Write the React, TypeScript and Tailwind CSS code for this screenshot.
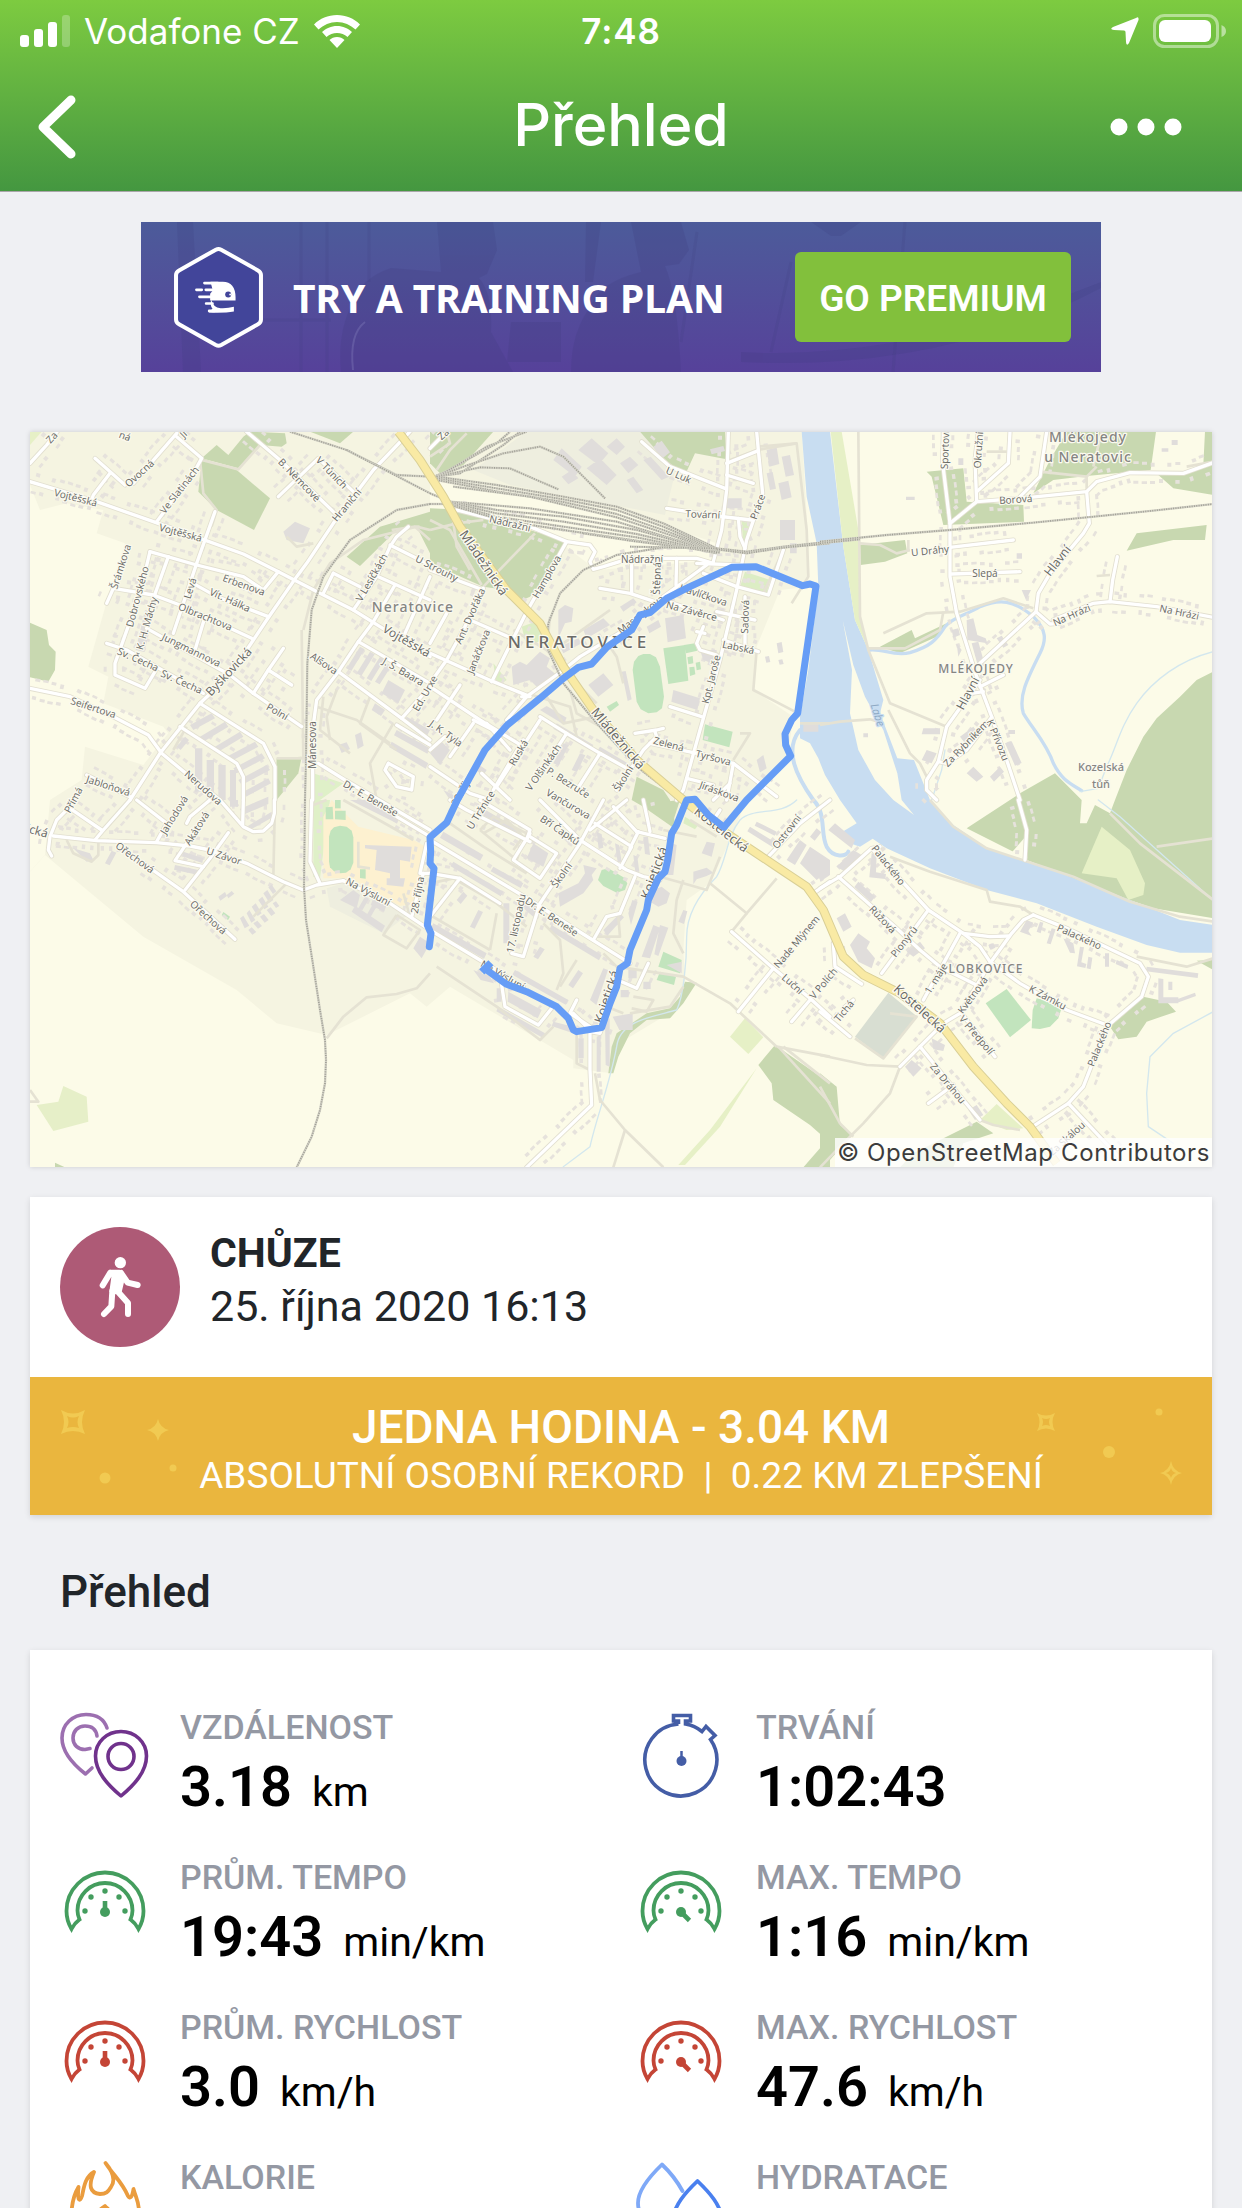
import React from "react";

/* ------------------------------------------------------------------ */
/* Map data: six survey sheets, each drawn at three units per map unit */
/* ------------------------------------------------------------------ */

type Label = [x: number, y: number, angle: number, text: string, size?: number];

interface Sheet {
  x: number;
  y: number;
  areas: [fill: string, points: string][];
  buildings: string;
  paths: string[];
  roads: string[];
  plain: string[];
  rails: string[];
  labels: Label[];
}

const FOREST = "#c8d8b0";
const WATER = "#c8ddf1";
const MEADOW = "#e6f0c6";
const PITCH = "#c2e4bd";
const LAND = "#fcfbe8";
const TOWN = "#f5f4e1";
const YARD = "#eeeedf";

const SHEETS: Sheet[] = [
  {
    x: 0,
    y: -2,
    areas: [
      [TOWN, "0,0 2315,0 2335,340 2335,470 2250,480 2180,650 2170,780 2290,860 2270,1000 2150,1110 2100,1230 2040,1360 1970,1410 1960,1560 1965,1650 1955,1720 1900,1760 1750,1850 1745,1930 1630,1915 1630,1890 1260,1670 1190,1730 1140,1690 890,1815 740,1780 620,1680 340,1520 45,1275 0,1325"],
      [LAND, "0,165 30,240 110,220 220,240 200,310 285,340 240,480 175,710 235,740 220,820 400,890 415,910 340,1005 165,950 155,1050 60,1110 45,1275 0,1325"],
      [MEADOW, "0,5 35,5 0,45"],
      [FOREST, "515,85 620,120 720,205 672,300 560,240 505,185"],
      [FOREST, "515,85 560,45 595,75 640,20 660,5 765,10 770,40 755,50 690,45 625,115"],
      [FOREST, "840,5 970,5 930,40"],
      [FOREST, "950,380 1050,290 1200,245 1200,280 1100,300 990,408"],
      [FOREST, "1160,290 1200,270 1200,370"],
      [FOREST, "0,578 50,600 57,645 77,665 75,720 55,755 0,742"],
      [FOREST, "740,985 815,980 805,1030 740,1110 735,1110"],
      ["#dff0c8", "850,1030 940,1060 870,1110 900,1110 870,1345 850,1340"],
    ],
    buildings:
      "M480 885l65 -35 10 15 -65 35z M510 920l75 -45 10 15 -75 45z M555 950l75 -45 10 15 -75 45z M590 980l85 -45 10 15 -85 45z M610 1015l85 -45 10 15 -85 45z M625 1050l85 -45 10 15 -85 45z M640 1085l75 -40 8 15 -75 40z M495 955h22v130h-22z M530 990h22v120h-22z M565 1005h22v105h-22z M600 1020h18v90h-18z M345 540l28 6 -30 120 -26 -6z M950 715l40 -65 14 8 -40 65z M980 730l40 -65 14 8 -40 65z M1010 745l40 -65 14 8 -40 65z M1035 755l35 -55 14 8 -35 55z M1055 790l20 -40 50 30 -20 40z M760 305l35 -30 45 20 -20 45 -50 -10z M925 945l25 -8 10 20 -25 12z M975 915l18 -8 8 40 -18 10z M1035 820l30 20 -12 18 -28 -18z M1100 900l100 55 -8 16 -100 -55z M1130 860l70 40 -8 16 -70 -40z M1085 935l110 65 -8 16 -110 -65z M440 950l25 -30 12 10 -25 30z",
    paths: ["510,90 520,190 560,240 545,290", "515,90 625,118 690,45", "740,985 830,985", "860,830 980,870 1080,940", "880,800 870,900 960,970", "920,780 890,860 900,930", "1020,800 990,880 1100,960", "1040,1110 1020,1000 1090,880", "815,600 820,985", "820,600 850,480 900,400 1000,330 1160,290 1200,300", "1085,300 1155,290 1200,330", "430,960 470,890", "770,320 800,350 850,340"],
    roads: [
      "0,155 200,215 370,275 510,325 640,372 745,425 870,490 970,540 1050,590 1200,680",
      "0,100 50,45 85,0",
      "195,85 285,165", "240,130 190,195 185,210",
      "310,160 440,10", "440,20 515,85 490,130 380,275",
      "650,5 750,90 915,250", "745,200 865,85 970,185",
      "1140,5 1030,120 910,280 830,400 800,440 710,570 600,735 510,820 390,970 300,1110",
      "555,245 500,400 430,610",
      "360,365 500,405 640,440 700,480 745,425",
      "360,365 330,490 255,700 255,735 345,775 375,725",
      "415,380 365,520", "230,520 250,475 370,495 450,525 665,625", "480,455 560,500 715,560",
      "350,595 600,735 670,790 815,890", "525,560 495,660", "230,640 290,660 520,790",
      "760,655 715,720 670,790", "715,720 785,765",
      "0,775 120,800 250,860 355,915 395,970 480,1040 570,1110",
      "510,820 700,940 735,1010 735,1110", "450,890 620,1000 640,1040 640,1110",
      "170,1035 300,1100",
      "1135,290 1100,320 1080,350 1040,440 970,540", "1080,345 1200,405", "910,430 990,470", "910,430 880,490", "1045,440 1200,510", "1095,465 1030,575 985,635 925,725 860,810 848,900 848,1110",
      "1200,440 1125,610", "985,635 1200,760", "925,725 1115,865 1200,770", "1115,865 1200,930",
      "865,1000 945,1050 1200,1200",
      "1075,1000 1150,1040 1145,1080 1100,1070 1065,1020 1075,1000",
    ],
    plain: ["1100,885 1200,945"],
    rails: ["780,5 950,60 1100,135 1200,140", "950,60 1200,190", "1200,222 1100,240 960,330 880,440 845,540 832,700 828,985 825,1110"],
    labels: [
      [65, 22, -48, "Za"], [285, 18, 20, "ná"], [460, 12, -45, "Ji"], [328, 130, -42, "Ovocná"], [448, 180, -52, "Ve Slatinách"], [137, 203, 14, "Vojtěšská"], [452, 308, 15, "Vojtěšská"],
      [808, 150, 46, "B. Němcové"], [905, 128, 46, "V Tůních"], [950, 225, -50, "Hraniční"], [272, 410, -72, "Šrámkova"], [322, 500, -75, "Dobrovského"], [350, 580, -74, "K. H. Máchy"], [480, 475, -72, "Levá"],
      [642, 465, 20, "Erbenova"], [600, 510, 24, "Vít. Hálka"], [526, 560, 22, "Olbrachtova"], [484, 660, 26, "Jungmannova"], [324, 688, 24, "Sv. Čecha"], [455, 755, 24, "Sv. Čecha"],
      [596, 725, -47, "Byškovická", 12], [882, 700, 34, "Alšova"], [742, 845, 30, "Polní"], [190, 833, 18, "Seifertova"], [235, 1067, 18, "Jabloňová"], [520, 1073, 42, "Nerudova"], [847, 945, -90, "Mánesova"],
      [1025, 442, -60, "V Lesíčkách"], [1220, 415, 27, "U Strouhy"], [1130, 632, 30, "Vojtěšská", 12], [1120, 725, 30, "J. Š. Baara"], [1185, 790, -60, "Ed. Urxe"], [1022, 1105, 30, "Dr. E. Beneše"], [130, 1110, -62, "Přímá"],
    ],
  },
  {
    x: 400,
    y: -2,
    areas: [
      [LAND, "0,150 130,155 560,240 860,340 860,390 500,420 380,330 0,240"],
      [YARD, "130,120 290,5 630,5 740,80 730,150 705,255 500,215 240,165"],
      [LAND, "985,640 970,780 1110,850 1150,620 1160,480 1110,500 1060,560"],
      [FOREST, "0,5 190,5 100,105 30,130 0,100"],
      [FOREST, "0,235 65,238 130,250 400,330 395,380 300,500 265,515 230,480 160,470 0,400"],
      [FOREST, "630,5 885,5 890,88 795,70 765,135 700,85"],
      [FOREST, "620,1040 700,1080 720,1110 740,1200 640,1130 605,1110"],
      ["#dcedc4", "275,590 330,570 360,620 290,650"],
      ["#dcedc4", "935,270 962,268 940,355"],
      ["#dcedc4", "945,425 1020,450 1010,490 930,470"],
      ["#dcedc4", "190,700 230,750 200,770"],
      [PITCH, "700,655 765,645 775,752 715,762"],
      [PITCH, "762,645 795,640 802,662 768,670"],
      [PITCH, "772,682 788,678 790,700 775,703"],
      [PITCH, "778,712 793,710 796,733 780,738"],
      [PITCH, "797,698 810,695 813,718 800,721"],
      [PITCH, "825,883 908,905 898,952 818,930"],
      [PITCH, "530,830 560,813 567,825 540,845"],
      [PITCH, "625,678 640,672 660,672 678,682 690,710 702,800 696,835 680,847 655,850 632,838 620,815 608,720 612,695"],
    ],
    buildings:
      "M370 90l25 -35 60 55 -20 30z M445 60l40 -35 50 45 -30 35z M470 115l40 -30 50 50 -30 30z M530 50l30 -25 25 25 -25 25z M590 150l20 -10 30 40 -20 10z M640 90l22 -10 55 60 -22 10z M570 100l30 -20 25 25 -30 25z M395 140l30 -20 20 25 -30 18z M670 50l25 -18 25 35 -25 20z M840 58l40 -10 5 15 -40 10z M890 205h45v30h-45z M1010 60l30 -8 8 50 -30 8z M1055 80l25 -5 12 60 -25 5z M1010 130l18 -4 10 50 -18 4z M1045 160l30 -8 10 50 -30 8z M1050 270h45v60h-45z M1080 340h20v30h-20z M705 565l55 -10 8 70 -55 12z M385 540l20 -15 25 10 -5 40 -20 5 -20 45z M730 780l80 25 -8 35 -78 -25z M810 660h50v45l-40 -15z M475 765l45 -35 30 35 -45 35z M575 725l12 -2 18 85 -12 5z M245 710l25 -15 20 10 40 -40 30 20 -10 25 30 25 -60 35 -20 -20 -50 15z M650 590l35 -20 8 20 -35 20z M570 530l40 -25 10 12 -40 28z M460 600l60 -35 20 20 -70 40z M390 650l55 -25 10 15 -55 30z M980 990l20 -15 10 40 -20 12z M330 840l20 -12 60 35 -10 20z M380 880l110 65 -10 16 -110 -65z M510 950l100 60 -10 16 -100 -60z M0 970l30 -40 30 30 -30 45z M400 940l16 6 -30 60 -16 -6z M450 970l16 6 -25 50 -16 -6z M140 1000l30 20 -10 16 -30 -20z M40 1080l60 30h-40z M1120 880h45v25h-45z M850 545l30 -10 5 20 -30 10z M1040 640l15 -4 5 30 -15 4z M1005 680l12 -2 4 18 -12 2z M1045 690l12 -2 4 14 -12 2z",
    paths: ["0,270 60,300 155,465", "0,300 80,280 160,270", "65,240 80,350 120,420", "315,310 160,470", "20,120 60,60 110,10", "0,80 60,40 50,5", "250,600 350,660 360,560", "350,660 420,740 500,820", "290,790 420,830 440,920", "980,50 1100,40 1130,300 1135,440 1085,520", "540,540 470,590 400,640", "980,660 970,780 1105,850", "930,910 960,910 910,990", "350,800 400,880 500,860", "1000,490 1060,360", "520,620 560,680 580,760", "0,960 60,910", "420,780 440,850 530,900", "900,90 980,60 1100,40", "1110,880 1200,880"],
    roads: [
      "0,55 40,15", "80,240 180,265 300,290 410,335 480,345 495,365 480,395 490,418 520,410 600,385 740,385 800,385 850,400",
      "410,335 350,440 290,545 185,755", "0,420 160,480", "160,475 100,600 50,690 0,760",
      "635,35 720,110 885,175", "895,5 890,180 875,300 850,395", "980,5 985,60 998,190 950,330 920,480 870,690 810,900 760,1080 740,1110", "890,135 970,160", "710,235 860,258 965,270", "925,265 930,320 945,355", "890,100 985,62",
      "820,430 920,470 1015,495 1060,360", "740,385 738,465", "605,400 605,490", "510,475 600,490 690,520", "830,405 700,500 600,590 450,680 400,720 290,800 230,870", "945,500 945,650", "860,545 975,570", "820,590 800,640 810,660 860,675", "880,630 985,665", "700,510 880,570", "800,400 930,405", "800,605 825,610",
      "0,670 100,715 190,755 300,800 275,800", "120,570 235,620", "0,770 150,870 280,950", "90,765 20,870", "190,900 130,870", "50,550 0,640", "720,830 815,860", "130,880 60,980", "330,860 410,910 510,970 600,1020",
      "330,870 200,1070", "410,910 320,1050", "510,970 440,1080", "615,910 680,900 700,895", "675,905 680,920 640,960 560,1080", "660,940 800,970 910,1000 1040,1100", "910,1000 890,1110", "770,1045 850,1065", "0,1010 120,1090 180,1110", "240,960 170,880", "280,930 190,1080", "155,1030 240,1110", "850,1110 900,1060", "0,960 45,920",
    ],
    plain: [],
    rails: [
      "0,145 60,120 170,50 290,5", "20,140 110,90 200,40 240,5", "20,140 90,130 220,45 270,5", "20,140 100,110 220,70 330,50 400,80 470,150 525,205", "20,140 150,112 240,115 320,150 385,178",
      "20,140 200,165 400,200 560,230 700,280 860,355", "20,145 200,175 400,208 560,240 700,290 860,358", "20,150 200,184 400,216 560,252 700,300 860,360", "70,170 300,200 560,262 720,315 860,362",
      "0,190 60,215 300,235 560,275 740,330 870,365", "60,215 200,240 400,260 620,300 860,366", "60,218 200,250 400,275 620,312 860,368", "60,222 200,260 400,290 620,322 860,370", "60,225 220,272 400,300 640,335 870,368", "460,310 600,332 780,355", "0,222 60,222",
      "600,350 860,355 950,365 1060,350 1200,335", "860,358 950,370 1060,353 1200,340",
      "860,355 700,352 560,375 460,420 390,490 355,580 350,650 400,760 500,880 620,1010 750,1110",
    ],
    labels: [
      [40, 12, -42, "Za"], [240, 280, 13, "Nádražní"], [162, 398, 56, "Mládežnická", 13], [350, 440, -60, "Hamplova"], [120, 558, -66, "Ant. Dvořáka"], [145, 665, -68, "Janáčkova"],
      [746, 135, 24, "U Luk"], [818, 253, 2, "Tovární"], [983, 230, -70, "Práce"], [636, 388, 0, "Nádražní"], [680, 445, -88, "Štěpná"], [820, 495, 18, "Havlíčkova"], [785, 543, 15, "Na Závěrce"], [945, 560, -88, "Sadová"], [925, 652, 12, "Labská"], [632, 553, -38, "Masarykova"],
      [843, 748, -76, "Kpt. Jaroše"], [565, 925, 50, "Mládežnická", 13], [716, 942, 15, "Zelená"], [850, 983, 14, "Tyršova"], [868, 1084, 20, "Jiráskova"], [265, 968, -60, "Ruská"], [340, 1012, -55, "V Olšinkách"], [415, 1058, 32, "P. Bezruče"], [580, 1045, -58, "Školní"], [48, 910, 36, "J. K. Tyla"], [98, 1075, -62, "28. října"],
    ],
  },
  {
    x: 790,
    y: -2,
    areas: [
      [WATER, "-55,5 30,5 70,350 105,570 145,660 190,810 180,850 232,985 282,990 330,1110 400,1185 500,1255 620,1295 760,1340 930,1410 1080,1470 1182,1485 1182,1568 1080,1568 980,1545 830,1490 650,1420 500,1380 330,1315 200,1255 158,1226 120,1250 90,1240 60,1210 110,1180 60,1110 15,1035 -5,985 -30,940 -60,925 -60,860 -35,720 -5,470 -10,340 -40,200"],
      [LAND, "68,570 100,705 135,800 190,900 232,1030 245,1110 282,1155 220,1110 165,1050 115,960 90,850 96,720"],
      [MEADOW, "32,5 65,5 115,300 120,560 145,660 105,570 70,350"],
      [FOREST, "320,125 430,115 440,215 610,225 612,275 370,285 335,140"],
      [FOREST, "120,345 255,330 262,370 195,395 122,405"],
      [FOREST, "740,5 1008,5 992,120 800,138 700,150 640,190 690,90"],
      [FOREST, "1155,5 1180,5 1180,195 1060,175 1015,135 1100,130 1150,105"],
      [FOREST, "950,310 1160,285 1155,330 1060,330 920,362"],
      [FOREST, "180,650 275,600 285,625 380,580 350,620 240,670"],
      [FOREST, "1180,725 1130,750 1080,800 1010,865 970,920 920,1020 885,1110 870,1150 825,1125 800,1180 780,1180 785,1110 705,1030 600,1090 440,1195 580,1265 620,1290 930,1410 1000,1435 1180,1465"],
      [LAND, "577,1265 615,1222 622,1285 610,1285"],
      [MEADOW, "845,1190 930,1260 975,1360 970,1395 925,1410 890,1345 785,1330"],
    ],
    buildings:
      "M258 200h26v10h-26z M415 85h15v20h-15z M605 480l28 0 -15 30z M590 370h16v16h-16z M440 570l20 -5 12 50 25 10 5 15 -60 -10z M395 600l20 -5 5 20 -20 8z M530 625l15 -8 20 28 -15 8z M455 640l20 -5 18 65 -20 5z M410 640l15 20 -10 20z M565 900h20v12h-20z M310 895l50 0 0 18 -55 0z M420 920l40 -30 15 20 -40 30z M440 1030l20 -20 30 30 -20 15z M510 1040l30 -30 12 15 -30 30z M555 940l20 -6 30 65 -20 8z M320 960l30 10 -15 30 -30 -10z M1025 55h20v10h-20z M1055 30h18v15h-18z M130 910h14v12h-14z",
    paths: ["115,5 120,560 145,660 210,820 380,890", "190,610 320,550 420,545 550,505 640,535", "145,655 255,655 360,600 370,545", "120,340 180,345 230,370 270,360", "265,330 265,365", "500,65 560,65", "205,840 270,970 300,1000 320,1040", "830,110 800,140 660,125", "845,5 820,110", "800,140 800,180", "1100,110 1180,95", "0,885 60,875 150,868 190,880", "830,438 870,435"],
    roads: [
      "370,5 368,100 390,280 390,440 410,550 470,740 515,860 560,990 600,1110", "390,280 470,215 600,205 800,185 830,155 930,128 1090,130 1180,98", "800,185 808,280 790,310 690,430 655,490 648,545 480,700", "470,215 465,90 475,5", "470,185 565,100 570,5", "600,200 660,140 680,5", "390,352 580,330", "395,432 600,425",
      "648,545 690,582 720,580", "700,570 820,520 870,515 1010,530 1180,562", "870,515 878,450 892,380", "480,770 550,735", "480,750 430,820 380,890 355,995 320,1050 320,1080 350,1110", "515,862 440,960 380,1000 355,995", "455,790 490,785",
    ],
    plain: [],
    rails: ["0,335 200,315 390,300 640,278 800,262 1000,242 1180,222", "0,340 120,328"],
    labels: [
      [375, 50, -88, "Sportovní"], [475, 60, -86, "Okružní"], [587, 208, -4, "Borová"], [330, 362, -6, "U Dráhy"], [495, 430, 0, "Slepá"], [712, 392, -52, "Hlavní", 12], [443, 790, -62, "Hlavní", 12], [755, 555, -24, "Na Hrázi"], [1078, 546, 12, "Na Hrázi"], [438, 940, -46, "Za Rybníkem"], [534, 930, 68, "K Přívozu"],
    ],
  },
  {
    x: 0,
    y: 368,
    areas: [
      ["#fdf1d0", "880,50 905,0 985,80 1150,120 1188,140 1165,310 1110,318 960,235 880,235"],
      [YARD, "890,265 940,250 1080,320 1140,340 1060,400 900,320"],
      [PITCH, "912,82 930,77 950,80 965,92 970,112 970,188 962,208 948,218 930,220 912,214 900,202 897,185 897,110 902,92"],
      [PITCH, "887,22 908,20 910,58 887,58"],
      [PITCH, "915,32 947,32 947,60 915,58"],
      [PITCH, "915,0 932,0 932,25 915,25"],
      [PITCH, "990,208 1007,208 1007,236 990,234"],
      [PITCH, "580,336 600,350 594,360 575,346"],
      ["#e6efc8", "100,858 170,890 175,965 70,993 20,915 85,905"],
      [FOREST, "75,1088 105,1102 75,1102"],
    ],
    buildings:
      "M1005 135l140 5 -5 45 -30 -5 0 70 -30 0 0 -30 -45 -10 5 -60 -35 -5z M1070 235h55l-5 25 -50 -5z M930 300l40 -30 20 15 -10 40z M965 335l10 -18 90 60 -10 20z M985 325l20 -35 12 6 -20 35z M1010 345l20 -35 12 6 -20 35z M1030 295l40 20 -8 20 -40 -20z M1150 445l20 -35 30 20 -25 45z M960 0h60l90 50 -10 20z M650 80l75 -45 0 18 -70 40z M600 0h24v20h-24z M645 20l70 -30v22l-70 30z M630 355l14 30 14 -8 -18 -30z M650 340l14 28 12 -8 -18 -30z M665 320l18 28 12 -8 -18 -30z M685 300l18 28 12 -8 -18 -30z M700 280l18 28 12 -8 -18 -30z M715 262l14 20 10 -8 -14 -20z M655 390l12 14 12 -8 -14 -14z M670 370l14 16 12 -8 -14 -16z M690 350l14 18 12 -8 -14 -18z M710 330l14 18 12 -8 -14 -18z M728 310l10 14 10 -6 -10 -14z M460 155l60 20 -3 14 -60 -20z M435 195l70 15 -3 14 -70 -15z M225 190l20 -38 14 6 -20 38z M130 145l50 15 10 20 -20 5z M565 290l20 -14 6 12 -20 14z M590 285l15 -12 8 8 -18 14z",
    paths: ["770,250 670,350", "890,715 940,650 1010,592 1100,582 1160,565 1200,520", "735,0 730,230", "110,120 130,160 185,185 205,165 205,125", "985,125 985,200 1020,205", "1100,345 1060,405 1130,445 1170,390 1100,345", "1120,280 1140,350", "850,15 890,0", "940,0 1100,90 1150,120", "0,870 25,905 0,905"],
    roads: [
      "300,0 220,90 195,120", "120,20 80,60 60,110 55,150 65,168", "70,108 200,122 380,128 480,138 540,150 650,190 760,245 820,270 860,255 940,242", "120,25 215,90", "320,0 410,70 380,125", "570,0 640,80 670,95 700,93 725,70 733,40 733,0", "640,0 638,75", "470,130 435,182 520,200", "595,98 540,175 465,270", "340,190 460,275 615,418", "845,0 840,185 870,250", "940,242 1080,310 1200,390", "1200,220 1170,220 1190,130", "1145,350 1180,220", "470,70 480,50 540,0", "1100,50 1200,110",
    ],
    plain: [],
    rails: ["825,0 822,260 828,360 850,500 870,630 885,720 888,780 885,850 870,930 845,1010 800,1102"],
    labels: [
      [22, 92, 16, "ická", 12], [432, 45, -58, "Jahodová"], [500, 85, -58, "Akátová"], [315, 173, 36, "Ořechová"], [582, 168, 18, "U Závor"], [535, 352, 42, "Ořechová"], [1015, 275, 28, "Na Výsluní"], [1162, 285, -80, "28. října"],
    ],
  },
  {
    x: 400,
    y: 368,
    areas: [
      [FOREST, "1035,735 1200,850 1200,1010 1185,1015 1140,975 1030,900 1025,850 985,795"],
      [FOREST, "1120,1102 1200,1010 1200,1102"],
      [FOREST, "765,545 800,548 760,610 720,655 650,660 600,700 565,770 550,820 535,820 545,740 560,700 650,640 720,625 750,590"],
      [FOREST, "645,12 750,0 728,68"],
      ["#dcedc4", "765,50 805,75 795,88 760,70"],
      [MEADOW, "945,655 1000,712 955,762 900,710"],
      [MEADOW, "980,805 870,980 765,1095 745,1095 840,990"],
      [PITCH, "700,455 755,480 750,520 685,500"],
      [PITCH, "690,515 738,530 732,555 680,540"],
      [PITCH, "515,210 535,205 580,232 592,250 585,270 560,278 520,258 504,240"],
    ],
    buildings:
      "M385 280l60 -30 20 -30 -5 -25 40 10 -15 20 5 15 -30 40 -70 40z M275 320l20 -20 35 20 -15 35z M365 375l150 90 -8 16 -150 -90z M255 510l160 90 -8 14 -160 -90z M10 370l160 90 -8 16 -160 -90z M40 95l120 70 -10 18 -120 -70z M70 185l150 90 -8 14 -150 -90z M190 200l90 50 -8 14 -90 -50z M310 130l45 30 -15 40 -50 -25z M220 310h18v120h-18z M595 340l12 -40 16 5 -20 70z M520 390l50 -50 12 12 -50 55z M635 470l35 -95 20 8 -30 92z M690 375l25 8 -30 85 -12 -5z M500 95l15 8 5 40 -14 4z M555 130l12 5 8 50 -12 2z M610 165l12 5 6 45 -12 2z M640 110h14l6 55 -15 -3z M725 130l15 5 -10 90 -20 0z M815 160l15 -35 25 5 -10 40z M790 215l40 -12 20 15 -20 10 -30 10 -10 15z M670 270l25 -10 25 20 -10 30 -25 10 -25 -15z M745 365l15 -35 12 4 -10 38z M480 600l40 -95 14 5 -35 105z M525 660l14 -5v145l-12 -5z M500 710l12 -5v110h-12z M548 650l60 -10v50l-40 0z M445 715h16v60h-16z M370 665l60 15 -5 18 -60 -20z M235 575l100 55 -12 25 -90 -50z M200 565h14v40h-14z M205 620l140 80 -6 14 -140 -80z M130 510l50 20 12 20 -40 -10z M415 555l30 -45 14 10 -30 45z M120 380l25 -50 14 6 -25 50z M80 300l20 -25 12 12 -20 25z M310 470l20 -30 14 8 -20 30z M1110 190l30 -50 60 40v30l-40 30z M1070 180l40 -60 20 15 -35 60z M1140 110l20 -25 14 12 -20 25z M960 80l80 50 -8 14 -80 -50z M980 65l60 30 -6 12 -60 -30z M710 495l45 -10v35z M595 510h25v25h-25z M640 545h22v22h-22z M572 570h24v22h-24z M150 20l120 70 -8 16 -120 -70z",
    paths: ["0,110 60,70 160,140 290,220", "0,250 70,235 200,310 290,380", "150,90 190,50 290,100 260,180 150,90", "340,370 390,420 400,520 380,570", "440,480 390,560", "500,410 570,410 565,350", "0,345 60,380 180,450", "180,450 200,340", "20,500 200,620 330,720 370,680", "440,700 440,790 480,810", "520,460 560,500 760,530 900,610 1040,740", "760,460 730,400 740,300 760,240", "690,230 760,250 830,270 870,170", "600,640 720,620 760,560", "495,820 510,900 585,990 700,1102", "585,990 550,1102", "840,250 950,340 1040,235", "950,340 905,395", "1040,740 1200,770", "1045,740 1200,910", "1060,740 1200,850", "610,590 670,600 650,635 605,625", "780,60 860,110", "160,100 230,60 280,110 250,150", "530,620 580,640", "700,90 800,110"],
    roads: [
      "0,120 150,210 300,300 440,390 600,490", "60,0 110,30 300,125", "330,0 450,120 590,210 640,230 690,240", "520,0 450,130 330,310 280,470 245,460", "300,100 250,180 330,235 380,160 300,110", "590,0 480,90", "615,230 570,340 530,350 490,420", "640,0 655,70 660,95", "495,70 605,140 570,205", "620,95 705,115", "625,95 600,145", "550,20 620,95", "0,390 150,480 280,560", "0,350 90,235 0,220", "90,235 210,310", "215,555 225,620 325,675 365,625", "440,600 420,640 480,680", "480,690 480,810 485,915 290,1102", "655,490 620,565 575,545", "520,670 510,700 480,695", "430,640 480,690", "1150,280 1200,245", "1200,0 1110,70 1010,175", "905,395 1030,505 1140,595 1200,650", "1030,505 925,635", "1140,600 1085,665", "870,30 850,60", "150,0 300,90 290,120",
    ],
    plain: [],
    rails: [],
    labels: [
      [152, 30, -58, "U Tržnice"], [415, 12, 30, "Vančurova"], [390, 90, 34, "Bří Čapků"], [395, 225, -55, "Školní"], [365, 350, 34, "Dr. E. Beneše"], [258, 370, -78, "17. listopadu"], [672, 218, -70, "Kojetická", 13], [530, 590, -72, "Kojetická", 13], [875, 88, 38, "Kostelecká", 13], [1070, 95, -52, "Ostrovní"], [1100, 425, -50, "Nade Mlýnem"], [1088, 552, 42, "Luční"], [1180, 550, -50, "V Polích"], [218, 525, 30, "Na Výsluní"],
    ],
  },
  {
    x: 790,
    y: 368,
    areas: [
      [FOREST, "970,590 1040,605 1068,635 980,665 950,710 895,718 870,680"],
      [PITCH, "560,567 633,660 570,712 497,610"],
      [PITCH, "650,595 728,615 715,655 690,680 660,687 635,685 638,630"],
      ["#d8ded2", "205,578 292,650 190,775 105,710"],
      [MEADOW, "530,912 610,985 560,990 480,960"],
      [FOREST, "0,820 50,860 60,975 95,1005 30,1080 0,1102"],
      [FOREST, "280,1060 470,965 520,1000 430,1030 400,1102 240,1102"],
      [FOREST, "1130,482 1180,480 1180,510"],
    ],
    buildings:
      "M0 165l30 20 0 40 -30 20z M25 90l20 -20 60 50 -10 25z M50 200l50 -50 25 15 -50 50z M155 160l15 2 -2 55 30 5 -2 15 -48 -5z M115 245l50 45 -12 16 -50 -45z M50 355l25 -15 20 40 -25 15z M90 435l25 -35 35 25 -10 20 25 30 -10 30 -40 -20z M600 395l20 -35 20 8 -15 25 10 15z M680 430l15 -45 12 3 -15 45z M650 395l10 -30 10 3 -8 32z M730 415l30 15 5 30 -15 -2z M780 440l12 2 -8 45 15 5 -3 12 -25 -5z M805 470l12 3 -5 35 -12 -3z M855 460h12v40h-12z M890 480l35 15 -3 12 -35 -15z M980 500l155 20 -2 14 -155 -20z M1015 535l15 2 0 55 45 0v18h-60z M1045 545h12v25h-12z M1065 600l60 -22 3 10 -60 22z M445 930l25 -15 20 30 -25 15z M255 800l20 -20 30 25 -25 25z M505 435l15 -6 6 14 -15 6z M260 455l40 -30 15 20 -35 25z M335 715l40 20 -5 18 -30 -5z",
    paths: ["330,0 400,80 500,145 760,230 930,305 1080,350 1180,365", "210,170 330,215 500,270 510,305 600,320 640,345", "950,470 1100,500 1180,475", "0,765 140,795 240,800 210,880 130,970 60,1040 0,1102", "50,450 70,480 240,590 300,640", "0,860 60,970 100,1010", "480,960 520,975 600,990", "210,640 290,650 190,775 105,715", "1010,140 1180,115", "870,40 960,130 1180,300"],
    roads: [
      "0,265 60,230 155,145 180,140", "55,230 230,385 300,450 360,500 480,560", "160,150 325,330 430,400 480,440 510,485 600,550 740,630 860,675", "430,400 510,410 565,408", "640,345 610,360 575,400 510,490 420,640 370,670 240,800", "640,345 740,385 960,490 985,530 965,590 860,680 790,860 745,910 630,985", "325,330 185,520", "420,400 310,600", "40,430 45,500 125,552", "0,635 90,710", "70,625 100,600", "300,740 430,900 480,960", "745,910 900,1075", "325,910 400,855", "425,640 525,770", "595,0 620,90 615,180",
    ],
    plain: [],
    rails: [],
    labels: [
      [205, 195, 52, "Palackého"], [188, 358, 46, "Růžová"], [252, 425, -52, "Pionýrů"], [348, 535, -58, "1. máje"], [300, 625, 42, "Kostelecká", 13], [458, 585, -54, "Květnová"], [683, 592, 28, "K Zámku"], [778, 410, 24, "Palackého"], [838, 732, -68, "Palackého"], [470, 705, 50, "V Předpolí"], [384, 850, 50, "Za Dráhou"], [72, 633, -50, "Tichá"], [740, 1015, -42, "Za Skálou"],
    ],
  },
];

const MAIN_ROAD = "1105,5 1170,90 1240,200 1290,290 1430,480 1530,580 1600,710 1690,840 1820,990 1960,1110 2060,1190 2240,1310 2330,1370 2380,1440 2440,1580 2500,1635 2610,1690 2730,1780 2830,1910 2930,2020 3000,2090 3080,2200";

const ROUTE =
  "-2,1550 3,1510 -8,1485 12,1315 0,1300 2,1265 0,1222 50,1178 82,1110 165,960 232,885 330,805 400,745 445,712 485,702 530,652 605,600 630,555 660,548 710,505 775,472 905,412 978,410 1118,467 1140,462 1158,468 1103,850 1085,870 1065,912 1067,945 1082,978 950,1110 882,1192 835,1155 795,1108 770,1110 740,1185 725,1210 713,1290 705,1325 685,1345 655,1410 650,1440 600,1560 592,1600 570,1615 560,1670 540,1720 515,1793 440,1805 430,1800 415,1765 380,1730 290,1685 230,1663 170,1620";

const parse = (points: string) => points.split(" ").map((p) => p.split(",").map(Number));

/** Small house footprints on both sides of a street. */
function housesAlong(points: string): string {
  const pts = parse(points);
  let out = "";
  for (let i = 1; i < pts.length; i++) {
    const [x0, y0] = pts[i - 1];
    const [x1, y1] = pts[i];
    const len = Math.hypot(x1 - x0, y1 - y0);
    if (len < 30) continue;
    const ux = (x1 - x0) / len;
    const uy = (y1 - y0) / len;
    for (let d = 18; d < len - 10; d += 25) {
      for (const side of [-1, 1]) {
        const r = Math.abs(Math.sin(x0 * 3.1 + y1 * 1.7 + d * 5.3 + side * 2.9));
        if (r < 0.25) continue;
        const off = side * (20 + r * 10);
        const cx = x0 + ux * d - uy * off;
        const cy = y0 + uy * d + ux * off;
        const a = 4 + r * 4;
        const b = 4 + (1 - r) * 4;
        const ax = ux * a, ay = uy * a, bx = -uy * b, by = ux * b;
        out += `M${(cx - ax - bx).toFixed(0)} ${(cy - ay - by).toFixed(0)}l${(2 * ax).toFixed(0)} ${(2 * ay).toFixed(0)} ${(2 * bx).toFixed(0)} ${(2 * by).toFixed(0)} ${(-2 * ax).toFixed(0)} ${(-2 * ay).toFixed(0)}z`;
      }
    }
  }
  return out;
}

function Layer({ draw }: { draw: (s: Sheet) => React.ReactNode }) {
  return (
    <>
      {SHEETS.map((s, i) => (
        <g key={i} transform={`translate(${s.x} ${s.y}) scale(0.33333)`}>
          {draw(s)}
        </g>
      ))}
    </>
  );
}

const SHEET_B = "translate(400 -2) scale(0.33333)";
const SHEET_A = "translate(0 -2) scale(0.33333)";
const SHEET_C = "translate(790 -2) scale(0.33333)";

function RouteMap() {
  return (
    <svg viewBox="0 0 1182 735" className="block h-auto w-full" role="img" aria-label="Mapa trasy">
      <rect width="1182" height="735" fill={LAND} />
      <Layer draw={(s) => s.areas.map(([fill, p], i) => <polygon key={i} points={p} fill={fill} />)} />
      <g transform={SHEET_C} fill="none" stroke={WATER} strokeLinejoin="round" strokeLinecap="round">
        <path strokeWidth="10" d="M148 660C190 655 220 680 270 668C330 650 350 630 375 590C400 560 440 555 480 530C540 505 580 510 640 560C680 600 680 630 660 670C620 750 595 800 610 850C640 900 680 940 700 1000C725 1050 750 1060 785 1082" />
        <path strokeWidth="12" d="M-60 900C-110 960 -70 1040 -20 1110C20 1150 0 1210 20 1250C40 1285 80 1280 85 1265" />
        <g strokeWidth="4" stroke="#d3e7ee">
          <path d="M1180 665C1080 690 1000 750 950 820C900 890 890 950 860 1010L835 1075L780 1085" />
          <path d="M375 960L365 1020L335 1110" />
          <path d="M1180 1745L1060 1810L990 1880L980 1990L985 2090L1060 2140" />
          <path d="M835 1110L900 1160L1180 1412" />
          <path d="M-70 1110C-120 1160 -200 1130 -240 1170C-280 1220 -280 1290 -310 1340C-350 1380 -400 1440 -400 1520C-400 1600 -410 1700 -430 1740C-500 1760 -600 1770 -610 1850C-630 1960 -670 2060 -690 2150L-770 2210" />
        </g>
      </g>
      <Layer draw={(s) => <path d={s.roads.map(housesAlong).join("")} fill="#e6e2dc" />} />
      <Layer draw={(s) => <path d={s.buildings} fill="#e0dddb" />} />
      <Layer
        draw={(s) =>
          s.paths.map((p, i) => <polyline key={i} points={p} fill="none" stroke="#e5e2d3" strokeWidth="8" strokeLinejoin="round" />)
        }
      />
      <Layer
        draw={(s) =>
          [...s.roads, ...s.plain].map((p, i) => (
            <polyline key={i} points={p} fill="none" stroke="#e2dfd0" strokeWidth="15" strokeLinejoin="round" strokeLinecap="round" />
          ))
        }
      />
      <Layer
        draw={(s) =>
          [...s.roads, ...s.plain].map((p, i) => (
            <polyline key={i} points={p} fill="none" stroke="#ffffff" strokeWidth="10" strokeLinejoin="round" strokeLinecap="round" />
          ))
        }
      />
      <Layer
        draw={(s) =>
          s.rails.map((p, i) => (
            <g key={i} fill="none" strokeLinejoin="round">
              <polyline points={p} stroke="#d3d2c6" strokeWidth="7" />
              <polyline points={p} stroke="#a09f95" strokeWidth="5" strokeDasharray="3 4" />
            </g>
          ))
        }
      />
      <g transform={SHEET_A} fill="none" strokeLinejoin="round">
        <polyline points={MAIN_ROAD} stroke="#d9cf96" strokeWidth="27" />
        <polyline points={MAIN_ROAD} stroke="#f9eaa4" strokeWidth="21" />
      </g>
      <g fontFamily='"Open Sans", "Noto Sans", sans-serif' fill="#666663" stroke="#fbfaf0" strokeWidth="2.5" strokeLinejoin="round" paintOrder="stroke" textAnchor="middle">
        {SHEETS.flatMap((s, i) =>
          s.labels.map(([x, y, angle, text, size = 10], j) => (
            <text key={`${i}-${j}`} fontSize={size} dy={size * 0.36} transform={`translate(${s.x + x / 3} ${s.y + y / 3}) rotate(${angle})`}>
              {text}
            </text>
          ))
        )}
        <g fontFamily='"Noto Sans", sans-serif' fontWeight="500" fill="#858583">
          <text x="383" y="180" fontSize="14" className="tracking-[1px]">Neratovice</text>
          <text x="549" y="216" fontSize="17" className="tracking-[4px]" fill="#6b6b68">NERATOVICE</text>
          <text x="1058" y="10" fontSize="14" className="tracking-[1px]">Mlékojedy</text>
          <text x="1058" y="30" fontSize="14" className="tracking-[1px]">u Neratovic</text>
          <text x="946" y="241" fontSize="12" className="tracking-[1px]">MLÉKOJEDY</text>
          <text x="956" y="541" fontSize="12" className="tracking-[1px]">LOBKOVICE</text>
          <text x="1071" y="339" fontSize="11">Kozelská</text>
          <text x="1071" y="356" fontSize="11">tůň</text>
        </g>
        <text transform="translate(844 284) rotate(72)" fontSize="11" fontStyle="italic" fill="#8fa9c4" stroke={WATER}>Labe</text>
      </g>
      <g transform={SHEET_B} fill="none" stroke="#669df6" strokeLinejoin="round" strokeLinecap="round">
        <polyline points={ROUTE} strokeWidth="21" />
        <polyline points="163,1618 175,1606" strokeWidth="22" strokeLinecap="square" />
      </g>
    </svg>
  );
}

/* ---------------------------- Icons ------------------------------- */

const iconClass = "h-[90px] w-[90px] shrink-0 fill-none";

function PinsIcon() {
  return (
    <svg viewBox="0 0 90 90" className={iconClass} strokeWidth="3.6" strokeLinejoin="round" strokeLinecap="round" aria-hidden="true">
      <g stroke="#9c6fb0">
        <path d="M47 18C44 9 36 4.500 26 4.500C13 4.500 2 14 2 28C2 43 14 55 25.500 64L32 58" />
        <path d="M37 26C36 19 31 16 25 16C18 16 13 21 13 28C13 35 18 39.500 25 39.500L30 38.500" />
      </g>
      <g stroke="#70328c">
        <path d="M61 86C48 75 35.500 62 35.500 46C35.500 32 47 21.500 61 21.500S86.500 32 86.500 46C86.500 62 74 75 61 86Z" />
        <circle cx="61" cy="46.500" r="13" />
      </g>
    </svg>
  );
}

function StopwatchIcon() {
  return (
    <svg viewBox="0 0 90 90" className={iconClass} stroke="#445da6" strokeWidth="3.6" aria-hidden="true">
      <path d="M42.500 14V11H37.500V5.500H54.500V11H49.500V14A36 36 0 0 1 66 21.500L70 16.500L79 25.500L74.500 29.500A36 36 0 1 1 42.500 14" />
      <path d="M45.500 41V51" strokeWidth="2.500" />
      <circle cx="45.500" cy="51" r="5" fill="#445da6" stroke="none" />
    </svg>
  );
}

function GaugeIcon({ color, max }: { color: string; max?: boolean }) {
  return (
    <svg viewBox="0 0 90 90" className={iconClass} stroke={color} strokeWidth="3.8" aria-hidden="true">
      <path d="M11.500 69C8 63 6.500 57 6.500 51A38.500 38.500 0 0 1 83.500 51C83.500 57 82 63 78.500 69C77 66 74 62 70.500 59.500C72 56 72.500 54 72.500 50.500A27.500 27.500 0 0 0 17.500 50.500C17.500 54 18 56 19.500 59.500C16 62 13 66 11.500 69Z" />
      <g fill={color} stroke="none">
        <circle cx="25" cy="51" r="2.700" />
        <circle cx="31" cy="37" r="2.700" />
        <circle cx="45" cy="31" r="2.700" />
        <circle cx="59" cy="37" r="2.700" />
        <circle cx="65" cy="51" r="2.700" />
        <circle cx="45" cy="52" r="5" />
      </g>
      <path strokeWidth="4.600" d={max ? "M45 52L53.500 60.500" : "M45 52V41"} />
    </svg>
  );
}

function FlameIcon() {
  return (
    <svg viewBox="0 0 90 90" className={iconClass} stroke="#ea9c3e" strokeWidth="3.8" strokeLinejoin="round" aria-hidden="true">
      <path d="M45.500 3C53 12 56 20 51 27C48 32 46 34 40 34C30 33 28 26 34 12C25 17 24 27 22 36C20 42 17 42 18.500 27C13 36 12 44 11.500 52C11 70 26 86 45 86S80 70 79 52C79 42 76 38 73.500 29C72 38 70 39 68 36C62 22 54 16 45.500 3Z" />
      <path d="M45 46C36 52 30 60 30 69C30 78 37 86 45 86S60 78 60 69C60 60 53 54 45 46Z" />
    </svg>
  );
}

function DropsIcon() {
  return (
    <svg viewBox="0 0 90 90" className={iconClass} strokeWidth="3.8" strokeLinejoin="round" strokeLinecap="round" aria-hidden="true">
      <path stroke="#7fa9f7" d="M46.500 31C41 21 34 12 26 4.500C14 16 2 30 2 43C2 55 11 64 24 65" />
      <path stroke="#4a80ef" d="M61.500 21C50 32 37 46 37 61C37 75 48 85 61.500 85S86 75 86 61C86 46 73 32 61.500 21Z" />
    </svg>
  );
}

function PremiumBadge() {
  return (
    <svg viewBox="36 32 272 308" className="h-[103px] w-[91px] shrink-0" aria-hidden="true">
      <path d="M164 43Q172 39 180 43L290 105Q299 110 299 119V252Q299 261 290 266L180 328Q172 332 164 328L54 266Q45 261 45 252V119Q45 110 54 105Z" fill="#42459a" stroke="#fff" strokeWidth="12" />
      <g stroke="#fff" strokeWidth="8" strokeLinecap="round" fill="none">
        <path d="M130 143H170M106 163H122M134 163H165M115 184H165M140 204H150M135 204H154M144 226H160" />
      </g>
      <path d="M148 139H185Q222 140 223 185V195H147V175L155 165Z" fill="#fff" />
      <path d="M150 192Q156 216 178 218Q200 219 218 214V228Q190 233 142 231L154 220Q146 210 150 192Z" fill="#fff" />
      <circle cx="201" cy="177" r="9" fill="#42459a" />
      <circle cx="207" cy="177" r="3" fill="#fff" />
    </svg>
  );
}

function BannerPhoto() {
  return (
    <svg viewBox="0 0 960 150" preserveAspectRatio="xMidYMid slice" className="absolute inset-0 h-full w-full" aria-hidden="true">
      <g fill="#3d3a7c" opacity="0.2">
        <path d="M36 0H52L60 150H42Z" />
        <path d="M296 0H352L356 28L346 52L338 56Q352 72 350 110L372 150H200Q196 110 212 80Q220 56 250 46L300 50Z" />
        <path d="M490 0H540L548 28L538 42L524 44Q536 70 540 150H430Q430 110 450 84Q458 60 500 50Z" />
        <path d="M370 100H420V140H366Z" />
        <path d="M445 0H460L452 60H444Z" />
        <path d="M600 130Q760 140 960 60V66Q800 150 600 140Z" />
        <path d="M670 0H720L700 14H690Z" />
      </g>
      <path d="M160 0V150M186 0V150M228 0V60M556 10L540 120M650 40L630 130M764 0L752 150M120 98H190" stroke="#3d3a7c" strokeWidth="3" opacity="0.15" fill="none" />
      <path d="M224 100Q208 112 212 148" stroke="#9a9ad0" strokeWidth="2" opacity="0.25" fill="none" />
    </svg>
  );
}

function WalkIcon() {
  return (
    <svg viewBox="30 30 360 360" className="h-[120px] w-[120px] shrink-0" role="img" aria-label="Chůze">
      <circle cx="210" cy="210" r="180" fill="#ae5a76" />
      <circle cx="211" cy="137" r="17" fill="#fff" />
      <path d="M174 164Q178 158 186 158H208Q216 158 220 164L222 196L215 226L196 232L178 224L184 180Z" fill="#fff" />
      <g fill="none" stroke="#fff" strokeWidth="18" strokeLinecap="round" strokeLinejoin="round">
        <path d="M181 167L158 205" />
        <path d="M213 168L233 197L263 204" />
        <path d="M187 222L184 268L162 291" />
        <path d="M204 224L234 258V291" />
      </g>
    </svg>
  );
}

/* ------------------------- Page sections --------------------------- */

function StatusBar() {
  return (
    <div className="flex h-[62px] items-center px-5 text-[35px] leading-none text-white">
      <div className="flex flex-1 items-center gap-[14px]">
        <svg viewBox="0 0 50 32" className="h-8 w-[50px]" fill="#fff" aria-hidden="true">
          <rect x="0" y="20" width="9" height="12" rx="3" />
          <rect x="14" y="14" width="9" height="18" rx="3" />
          <rect x="28" y="7" width="9" height="25" rx="3" />
          <rect x="42" y="0" width="8" height="32" rx="3" opacity="0.25" />
        </svg>
        <span>Vodafone CZ</span>
        <svg viewBox="0 0 46 33" className="h-[33px] w-[46px]" fill="#fff" aria-hidden="true">
          <path d="M23 0C14 0 6 3.500 0 9.500L4.500 14.500C9.500 10 16 7 23 7S36.500 10 41.500 14.500L46 9.500C40 3.500 32 0 23 0Z" />
          <path d="M23 11C17 11 12 13.500 8 17L12.500 22C15.500 19.500 19 18 23 18S30.500 19.500 33.500 22L38 17C34 13.500 29 11 23 11Z" />
          <path d="M23 22C20 22 17.500 23 15.500 25L23 33L30.500 25C28.500 23 26 22 23 22Z" />
        </svg>
      </div>
      <span className="font-semibold tracking-wide">7:48</span>
      <div className="flex flex-1 items-center justify-end gap-[14px]">
        <svg viewBox="0 0 28 28" className="h-7 w-7" fill="#fff" aria-hidden="true">
          <path d="M25 1Q28 -1 27.500 3L18 26Q15.500 30 15 25L14.500 15Q14.500 13.500 13 13.500L3 13Q-2 12.500 2 10Z" />
        </svg>
        <svg viewBox="0 0 73 34" className="mr-[-4px] h-[34px] w-[73px]" aria-hidden="true">
          <rect x="1.500" y="1.500" width="63" height="31" rx="10" fill="none" stroke="#fff" strokeWidth="3" opacity="0.45" />
          <rect x="6" y="6" width="52" height="22" rx="6" fill="#fff" />
          <path d="M68.500 11Q73 13 73 17T68.500 23Z" fill="#fff" opacity="0.5" />
        </svg>
      </div>
    </div>
  );
}

function NavBar() {
  return (
    <nav className="flex h-[129px] items-center justify-between px-[38px]">
      <button type="button" aria-label="Zpět" className="flex w-24 justify-start">
        <svg viewBox="0 0 38 64" className="h-16 w-[38px]" fill="none" stroke="#fff" strokeWidth="9" strokeLinecap="round" strokeLinejoin="round" aria-hidden="true">
          <path d="M33 5L5 32L33 59" />
        </svg>
      </button>
      <h1 className="pb-1 text-[59px] leading-none font-medium text-white">Přehled</h1>
      <button type="button" aria-label="Další možnosti" className="flex w-24 justify-end pr-[22px]">
        <svg viewBox="0 0 72 18" className="h-[18px] w-[72px]" fill="#fff" aria-hidden="true">
          <circle cx="9" cy="9" r="8.500" />
          <circle cx="36" cy="9" r="8.500" />
          <circle cx="63" cy="9" r="8.500" />
        </svg>
      </button>
    </nav>
  );
}

function PremiumBanner() {
  return (
    <section className="relative mx-auto flex h-[150px] max-w-[960px] items-center bg-linear-to-b from-[#4c5b9a] to-[#56419a] pr-[30px] pl-8">
      <BannerPhoto />
      <div className="relative flex flex-1 items-center gap-[29px]">
        <PremiumBadge />
        <p className="font-['Noto_Sans'] text-[39px] leading-none font-bold whitespace-nowrap text-white">TRY A TRAINING PLAN</p>
      </div>
      <button type="button" className="relative h-[90px] w-[276px] rounded-md bg-[#82c03c] pt-1 text-[37px] font-semibold text-white">
        GO PREMIUM
      </button>
    </section>
  );
}

function RecordStrip() {
  return (
    <div className="relative flex h-[138px] flex-col items-center justify-center bg-[#eab63e] pt-2 text-white">
      <svg viewBox="0 0 170 138" className="absolute inset-y-0 left-0 h-full" fill="#f1ca52" aria-hidden="true">
        <path fillRule="evenodd" d="M31 33Q43 40 55 33Q49 45 55 57Q43 51 31 57Q37 45 31 33ZM37 39Q40 45 37 51Q43 49 49 51Q46 45 49 39Q43 42 37 39Z" />
        <path d="M128 42Q130 51 139 53Q130 55 128 64Q126 55 117 53Q126 51 128 42Z" />
        <circle cx="75" cy="101" r="5.500" />
        <circle cx="143" cy="91" r="3.500" />
      </svg>
      <svg viewBox="0 0 190 138" className="absolute inset-y-0 right-0 h-full" fill="#f1ca52" aria-hidden="true">
        <path fillRule="evenodd" d="M15 36Q24 41 33 36Q28 45 33 54Q24 49 15 54Q20 45 15 36ZM20 41Q22 45 20 49Q24 47 28 49Q26 45 28 41Q24 43 20 41Z" />
        <circle cx="137" cy="35" r="3.500" />
        <circle cx="87" cy="75" r="6" />
        <path fillRule="evenodd" d="M149 84Q151 94 160 96Q151 98 149 108Q147 98 138 96Q147 94 149 84ZM149 91Q148 95 144 96Q148 97 149 101Q150 97 154 96Q150 95 149 91Z" />
      </svg>
      <p className="relative text-[46px] leading-[52px] font-medium">JEDNA HODINA - 3.04 KM</p>
      <p className="relative text-[37px] leading-[46px] whitespace-pre">ABSOLUTNÍ OSOBNÍ REKORD  |  0.22 KM ZLEPŠENÍ</p>
    </div>
  );
}

interface Stat {
  label: string;
  value?: string;
  unit?: string;
  icon: React.ReactNode;
}

const GREEN = "#449d5e";
const RED = "#c44536";

const STATS: Stat[] = [
  { label: "VZDÁLENOST", value: "3.18", unit: "km", icon: <PinsIcon /> },
  { label: "TRVÁNÍ", value: "1:02:43", icon: <StopwatchIcon /> },
  { label: "PRŮM. TEMPO", value: "19:43", unit: "min/km", icon: <GaugeIcon color={GREEN} /> },
  { label: "MAX. TEMPO", value: "1:16", unit: "min/km", icon: <GaugeIcon color={GREEN} max /> },
  { label: "PRŮM. RYCHLOST", value: "3.0", unit: "km/h", icon: <GaugeIcon color={RED} /> },
  { label: "MAX. RYCHLOST", value: "47.6", unit: "km/h", icon: <GaugeIcon color={RED} max /> },
  { label: "KALORIE", icon: <FlameIcon /> },
  { label: "HYDRATACE", icon: <DropsIcon /> },
];

function StatItem({ label, value, unit, icon }: Stat) {
  return (
    <div className="flex h-[150px] items-start gap-[30px]">
      {icon}
      <dl>
        <dt className="text-[34px] leading-[34px] font-medium text-[#9498a3]">{label}</dt>
        {value && (
          <dd className="mt-2 flex items-baseline gap-5 text-black">
            <span className="text-[56px] leading-[70px] font-semibold">{value}</span>
            {unit && <span className="text-[41px] leading-[50px]">{unit}</span>}
          </dd>
        )}
      </dl>
    </div>
  );
}

export default function App() {
  return (
    <div className="flex h-screen flex-col bg-[#eff0f3] font-['Roboto',sans-serif] text-[#212529]">
      <header className="shrink-0 border-b border-[#a9a6a9] bg-linear-to-b from-[#7dcb40] to-[#449740] font-['Inter',sans-serif]">
        <StatusBar />
        <NavBar />
      </header>
      <main className="min-h-0 flex-1 overflow-y-auto px-[30px] pt-[30px] [scrollbar-width:none]">
        <PremiumBanner />
        <section className="relative mt-[60px] shadow-[0_0_5px_rgba(0,0,0,0.15)]">
          <RouteMap />
          <p className="absolute right-0 bottom-0 bg-white/80 px-[2px] font-['Inter',sans-serif] text-[24px] leading-[29px] tracking-wide text-[#3c3c3c]">
            © OpenStreetMap Contributors
          </p>
        </section>
        <section className="mt-[30px] bg-white shadow-[0_2px_6px_rgba(0,0,0,0.12)]">
          <div className="flex gap-[30px] p-[30px]">
            <WalkIcon />
            <div>
              <h2 className="text-[41px] leading-[53px] font-bold">CHŮZE</h2>
              <p className="text-[43px] leading-[52px]">25. října 2020 16:13</p>
            </div>
          </div>
          <RecordStrip />
        </section>
        <h2 className="mt-[51px] pl-[30px] text-[44px] leading-[52px] font-medium">Přehled</h2>
        <section className="mt-8 bg-white pt-[60px] shadow-[0_2px_6px_rgba(0,0,0,0.12)]">
          <div className="grid grid-cols-2 pl-[30px]">
            {STATS.map((s) => (
              <StatItem key={s.label} {...s} />
            ))}
          </div>
        </section>
      </main>
    </div>
  );
}
